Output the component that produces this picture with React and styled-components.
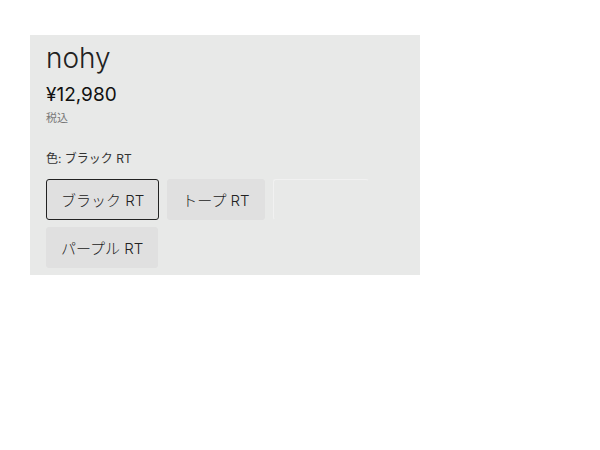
import React from "react";
import styled, { createGlobalStyle } from "styled-components";

const Global = createGlobalStyle`
  body {
    margin: 0;
    background: #fff;
    font-family: "Inter", "Noto Sans CJK JP", sans-serif;
    color: #222;
  }
`;

const Page = styled.div`
  padding: 35px 30px;
`;

const Panel = styled.div`
  width: 390px;
  box-sizing: border-box;
  background: #e8e9e8;
  padding: 5px 16px 7px;
`;

const Title = styled.h1`
  margin: 0;
  font-size: 28px;
  font-weight: 300;
  line-height: 36px;
  color: #222;
`;

const Price = styled.div`
  margin-top: 6px;
  font-size: 19px;
  font-weight: 400;
  line-height: 26px;
  color: #111;
`;

const Tax = styled.div`
  margin-top: 2px;
  font-size: 11px;
  line-height: 16px;
  color: #777;
`;

const ColorLabel = styled.div`
  margin-top: 25px;
  font-size: 12px;
  line-height: 16px;
  color: #333;
`;

const Options = styled.div`
  margin-top: 12px;
  display: flex;
  flex-wrap: wrap;
  gap: 7px 8px;
`;

const Option = styled.button`
  height: 41px;
  min-width: 96px;
  box-sizing: border-box;
  padding: 0 14px;
  border-radius: 3px;
  font-family: inherit;
  font-size: 15px;
  font-weight: 300;
  color: #222;
  background: ${(p) => (p.empty ? "transparent" : "#e0e0e0")};
  border: 1px solid
    ${(p) => (p.selected ? "#222" : p.empty ? "#f1f1f1" : "#e0e0e0")};
  border-bottom-color: ${(p) =>
    p.selected ? "#222" : p.empty ? "transparent" : "#e0e0e0"};
  border-right-color: ${(p) =>
    p.selected ? "#222" : p.empty ? "transparent" : "#e0e0e0"};
`;

export default function App() {
  return (
    <>
      <Global />
      <Page>
        <Panel>
          <Title>nohy</Title>
          <Price>¥12,980</Price>
          <Tax>税込</Tax>
          <ColorLabel>色: ブラック RT</ColorLabel>
          <Options>
            <Option selected>ブラック RT</Option>
            <Option>トープ RT</Option>
            <Option empty />
            <Option>パープル RT</Option>
          </Options>
        </Panel>
      </Page>
    </>
  );
}
